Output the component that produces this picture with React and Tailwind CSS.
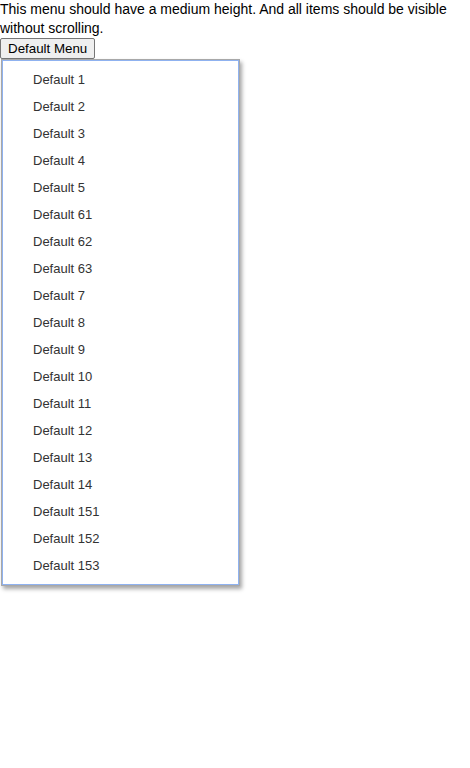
import React from 'react';

const ITEMS = ['1', '2', '3', '4', '5', '61', '62', '63', '7', '8', '9', '10', '11', '12', '13', '14', '151', '152', '153'];

export default function App() {
  return (
    <div className="bg-white min-h-screen text-black" style={{ fontFamily: '"Liberation Sans", Arial, sans-serif' }}>
      <p className="text-[14px] leading-[19px] pr-[20px]">
        This menu should have a medium height. And all items should be visible without scrolling.
      </p>
      <button className="h-[21px] px-[7px] text-[13.33px] leading-[15px] bg-[#efefef] border border-[#767676] rounded-[2px] block">
        Default Menu
      </button>
      <div className="ml-px w-[239px] h-[527px] border border-[#a8a8a8] shadow-[2px_3px_4px_rgba(0,0,0,0.35)] bg-white">
        <ul className="h-full border border-[#8fb2f0] py-[5px]">
          {ITEMS.map(n => (
            <li key={n} className="h-[27px] flex items-center pl-[30px] text-[13px] text-[#333]">
              Default {n}
            </li>
          ))}
        </ul>
      </div>
    </div>
  );
}
